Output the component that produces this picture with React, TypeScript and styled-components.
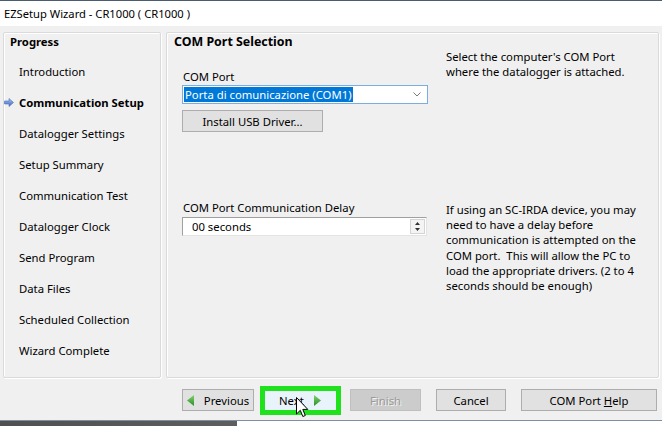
import React from 'react';
import styled, { createGlobalStyle } from 'styled-components';

const GlobalStyle = createGlobalStyle`
  html, body { margin: 0; padding: 0; background: #f0f0f0; }
  body {
    font-family: "Noto Sans", "Segoe UI", sans-serif;
    font-size: 11.3px;
    color: #000;
  }
`;

const Window = styled.div`
  position: relative;
  width: 662px;
  height: 426px;
  display: flex;
  flex-direction: column;
  background: #f0f0f0;
  overflow: hidden;
`;

const TitleBar = styled.div`
  flex: none;
  height: 26px;
  box-sizing: border-box;
  border-top: 1px solid #4a5d70;
  background: #fff;
  padding-left: 4px;
  display: flex;
  align-items: center;
  font-size: 11.2px;
  color: #000;
`;

const Main = styled.div`
  flex: none;
  height: 346px;
  margin-top: 6px;
  padding: 0 3px;
  display: flex;
  gap: 5px;
`;

const Panel = styled.div<{ $width: number }>`
  box-sizing: border-box;
  width: ${p => p.$width}px;
  height: 100%;
  border: 1px solid #dadada;
  box-shadow: inset 1px 1px 0 #fff, 1px 1px 0 #fff;
  border-radius: 2px;
`;

const ProgressTitle = styled.div`
  font-weight: 700;
  line-height: 16px;
  padding: 1px 0 0 6px;
`;

const StepList = styled.div`
  margin-top: 6px;
  display: flex;
  flex-direction: column;
`;

const Step = styled.div<{ $active?: boolean }>`
  height: 31px;
  display: flex;
  align-items: center;
  font-weight: ${p => (p.$active ? 700 : 400)};
`;

const StepIcon = styled.span`
  width: 15px;
  flex: none;
  display: flex;
  align-items: center;
`;

const SectionTitle = styled.div`
  font-weight: 700;
  font-size: 12.4px;
  line-height: 14px;
  padding: 2px 0 0 7px;
`;

const Content = styled.div`
  display: grid;
  grid-template-columns: 263px 1fr;
  grid-template-rows: 151px auto;
  padding-left: 16px;
`;

const Field = styled.div<{ $top: number }>`
  padding-top: ${p => p.$top}px;
  display: flex;
  flex-direction: column;
  align-items: flex-start;
`;

const Label = styled.div`
  line-height: 15px;
`;

const Description = styled.div<{ $top: number }>`
  padding-top: ${p => p.$top}px;
  line-height: 15.2px;
`;

const Select = styled.div`
  margin-top: 1px;
  margin-left: -1px;
  box-sizing: border-box;
  width: 246px;
  height: 19px;
  border: 1px solid #7aaee0;
  background: #fff;
  display: flex;
  align-items: center;
  padding: 0 1px;
`;

const Selected = styled.span`
  background: #0078d7;
  color: #fff;
  line-height: 15px;
  padding: 0 1px;
`;

const Chevron = styled.span`
  margin-left: auto;
  margin-right: 5px;
  display: flex;
`;

const SmallButton = styled.button`
  margin-top: 6px;
  margin-left: -1px;
  box-sizing: border-box;
  width: 141px;
  height: 22px;
  border: 1px solid #adadad;
  background: #e1e1e1;
  font: inherit;
  color: #000;
  padding: 0;
`;

const Spin = styled.div`
  margin-top: 2px;
  margin-left: -1px;
  box-sizing: border-box;
  width: 245px;
  height: 19px;
  border: 1px solid;
  border-color: #a0a0a0 #e3e3e3 #e3e3e3 #a0a0a0;
  background: #fff;
  display: flex;
  align-items: center;
  padding-left: 9px;
`;

const SpinButtons = styled.div`
  margin-left: auto;
  margin-right: 1px;
  width: 15px;
  height: 15px;
  display: flex;
  flex-direction: column;
  border: 1px solid #d4d4d4;
  box-sizing: border-box;
`;

const SpinHalf = styled.div`
  flex: 1;
  display: flex;
  align-items: center;
  justify-content: center;
  background: #f4f4f4;
`;

const Footer = styled.div`
  flex: none;
  height: 42px;
  box-sizing: border-box;
  padding: 2px 0 0 182px;
  display: flex;
  align-items: center;
`;

const Button = styled.button<{ $width: number; $gap: number; $disabled?: boolean }>`
  box-sizing: border-box;
  width: ${p => p.$width}px;
  height: 22px;
  margin-left: ${p => p.$gap}px;
  border: 1px solid ${p => (p.$disabled ? '#bfbfbf' : '#adadad')};
  background: ${p => (p.$disabled ? '#cccccc' : '#e1e1e1')};
  color: ${p => (p.$disabled ? '#9a9a9a' : '#000')};
  text-shadow: ${p => (p.$disabled ? '1px 1px 0 #f2f2f2' : 'none')};
  font: inherit;
  padding: 0;
  display: flex;
  align-items: center;
  justify-content: center;
  gap: 10px;
`;

const HighlightButton = styled.button`
  position: relative;
  box-sizing: border-box;
  width: 81px;
  height: 29px;
  margin-left: 6px;
  border: 5px solid #1fe21c;
  background: #e8f3fc;
  font: inherit;
  color: #000;
  padding: 0 0 0 14px;
  display: flex;
  align-items: center;
  gap: 10px;
`;

const Cursor = styled.svg`
  position: absolute;
  left: 31px;
  top: 6px;
`;

const Underline = styled.span`
  text-decoration: underline;
`;

const BottomStrip = styled.div`
  flex: 1;
  border-top: 1px solid #7d8fa3;
  background: linear-gradient(to right, #505050 0, #5e5e5e 237px, #fff 237px);
`;

const steps = [
  'Introduction',
  'Communication Setup',
  'Datalogger Settings',
  'Setup Summary',
  'Communication Test',
  'Datalogger Clock',
  'Send Program',
  'Data Files',
  'Scheduled Collection',
  'Wizard Complete',
];

const StepArrow = () => (
  <svg width="10" height="9" viewBox="0 0 10 9">
    <defs>
      <linearGradient id="sa" x1="0" y1="0" x2="0" y2="1">
        <stop offset="0" stopColor="#a9c3f0" />
        <stop offset="1" stopColor="#3f66c2" />
      </linearGradient>
    </defs>
    <path d="M0.5 3 H5 V0.5 L9.5 4.5 L5 8.5 V6 H0.5 Z" fill="url(#sa)" stroke="#4d6fb8" strokeWidth="0.6" />
  </svg>
);

const Tri = ({ dir }: { dir: 'left' | 'right' }) => (
  <svg width="7" height="11" viewBox="0 0 7 11">
    <defs>
      <linearGradient id={`g${dir}`} x1="0" y1="0" x2="0" y2="1">
        <stop offset="0" stopColor="#7ed36a" />
        <stop offset="1" stopColor="#2a8f2a" />
      </linearGradient>
    </defs>
    {dir === 'left' ? (
      <polygon points="7,0 7,11 0,5.5" fill={`url(#g${dir})`} />
    ) : (
      <polygon points="0,0 0,11 7,5.5" fill={`url(#g${dir})`} />
    )}
  </svg>
);

export default function App() {
  return (
    <>
      <GlobalStyle />
      <Window>
        <TitleBar>EZSetup Wizard - CR1000 ( CR1000 )</TitleBar>
        <Main>
          <Panel $width={158}>
            <ProgressTitle>Progress</ProgressTitle>
            <StepList>
              {steps.map((s, i) => (
                <Step key={s} $active={i === 1}>
                  <StepIcon>{i === 1 ? <StepArrow /> : null}</StepIcon>
                  {s}
                </Step>
              ))}
            </StepList>
          </Panel>
          <Panel $width={493}>
            <SectionTitle>COM Port Selection</SectionTitle>
            <Content>
              <Field $top={20}>
                <Label>COM Port</Label>
                <Select>
                  <Selected>Porta di comunicazione (COM1)</Selected>
                  <Chevron>
                    <svg width="8" height="5" viewBox="0 0 8 5">
                      <path d="M0.5 0.5 L4 4 L7.5 0.5" fill="none" stroke="#7a7a7a" strokeWidth="1" />
                    </svg>
                  </Chevron>
                </Select>
                <SmallButton>Install USB Driver...</SmallButton>
              </Field>
              <Description $top={0}>
                Select the computer's COM Port
                <br />
                where the datalogger is attached.
              </Description>
              <Field $top={0}>
                <Label>COM Port Communication Delay</Label>
                <Spin>
                  00 seconds
                  <SpinButtons>
                    <SpinHalf>
                      <svg width="5" height="3" viewBox="0 0 5 3">
                        <polygon points="0,3 5,3 2.5,0" fill="#333" />
                      </svg>
                    </SpinHalf>
                    <SpinHalf>
                      <svg width="5" height="3" viewBox="0 0 5 3">
                        <polygon points="0,0 5,0 2.5,3" fill="#333" />
                      </svg>
                    </SpinHalf>
                  </SpinButtons>
                </Spin>
              </Field>
              <Description $top={2}>
                If using an SC-IRDA device, you may
                <br />
                need to have a delay before
                <br />
                communication is attempted on the
                <br />
                COM port.&nbsp; This will allow the PC to
                <br />
                load the appropriate drivers. (2 to 4
                <br />
                seconds should be enough)
              </Description>
            </Content>
          </Panel>
        </Main>
        <Footer>
          <Button $width={72} $gap={0}>
            <Tri dir="left" />
            Previous
          </Button>
          <HighlightButton>
            Next
            <Tri dir="right" />
            <Cursor width="13" height="21" viewBox="0 0 13 21">
              <path
                d="M0.5 0.5 V17 L4.3 13.3 L6.8 19.5 L9.3 18.5 L6.8 12.4 L11.8 12.4 Z"
                fill="#fff"
                stroke="#000"
                strokeWidth="1"
                strokeLinejoin="miter"
              />
            </Cursor>
          </HighlightButton>
          <Button $width={71} $gap={9} $disabled>
            Finish
          </Button>
          <Button $width={70} $gap={15}>
            Cancel
          </Button>
          <Button $width={136} $gap={15}>
            <span>
              COM Port <Underline>H</Underline>elp
            </span>
          </Button>
        </Footer>
        <BottomStrip />
      </Window>
    </>
  );
}
